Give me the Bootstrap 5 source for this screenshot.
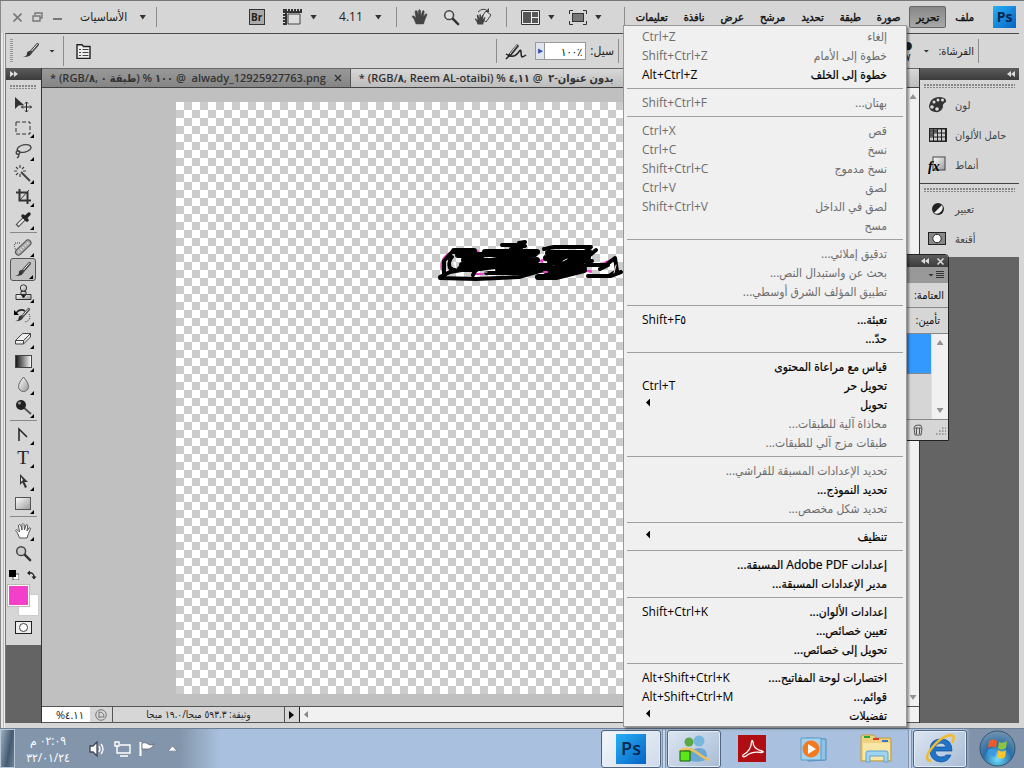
<!DOCTYPE html>
<html lang="ar">
<head>
<meta charset="utf-8">
<meta name="viewport" content="width=device-width, initial-scale=1">
<title>Photoshop</title>
<link rel="stylesheet" href="https://cdn.jsdelivr.net/npm/bootstrap@5.3.0/dist/css/bootstrap.min.css">
<style>
:root{--chrome:#d6d6d6;--edge:#4a4a4a;--dark:#646464}
body{font-family:"Open Sans","DejaVu Sans Condensed","DejaVu Sans",sans-serif;font-size:12px;line-height:16px;color:#222;background:var(--chrome);overflow:hidden}
button{font:inherit;color:inherit;background:none;border:0;padding:0}
svg{display:block;flex:none}
.fit{min-height:0;min-width:0}
.shell{border-top:1px solid #777;padding:0 5px 5px;background:linear-gradient(90deg,#888 1px,#e8e8e8 1px 3px,#bbb 3px 4px,#eee 4px 5px,var(--chrome) 5px)}
.shell-bar{height:32px;margin-left:-4px;margin-right:-4px;background:var(--chrome)}
.win-ctl{gap:10px}
.view-ctl{gap:14px}
.gap-arrow{gap:12px}
.opt-bar{height:35px;border-top:1px solid var(--edge);border-left:1px solid #888}
.vline{width:1px;height:24px;background:#8c8c8c}
.vline.low{height:20px}
.opt-rule{margin:0 12px 0 8px;height:30px}
.tri{width:7px;height:5px;background:#333;clip-path:polygon(0 0,100% 0,50% 100%)}
.tri-sm{width:6px;height:3px}
.up{transform:scaleY(-1)}
.flip{transform:scaleX(-1)}
.pale{opacity:.5}
.main-menu{gap:2px;padding:0 7px 0 4px}
.main-menu button{padding:0 6px;height:22px;line-height:18px;border:1px solid transparent;color:#111;font-size:11px;-webkit-text-stroke:.4px}
.main-menu .on{background:linear-gradient(#888,#a8a8a8);border-color:#666;border-radius:2px}
.ps-box{background:linear-gradient(135deg,#29b0f5,#0563c4);color:#06264d;font-weight:700;text-align:center}
.ps-mini{width:23px;height:22px;font-size:14px;line-height:21px;margin-left:10px}
.strip{height:12px;background:linear-gradient(#5c5c5c,#3c3c3c);color:#ddd}
.grip{height:4px;margin:0 4px 2px;background:radial-gradient(circle at 1px 1px,#888 1px,transparent 1px) 0 0/3px 3px}
.grip-v{width:3px;height:24px;background:repeating-linear-gradient(#999 0 1px,transparent 1px 2px)}
.tools{width:37px;background:var(--dark);border-right:1px solid #333;border-left:1px solid #777}
.tools-face{background:var(--chrome);padding:5px 1px 6px 0}
.tools-face .grip{margin-bottom:4px}
.tool{width:26px;height:23px;display:flex;align-items:center;justify-content:center;position:relative}
.more::after{content:"";position:absolute;right:2px;bottom:1px;border:2px solid;border-color:transparent #000 #000 transparent}
.tool.on{background:#c2c2c2;border:1px solid #555;border-radius:3px}
.tool-rule{height:1px;margin:1px 3px 2px 4px;background:#888;align-self:stretch}
.type-t{font:19px "Liberation Serif",serif}
.col-ctl{width:28px;height:20px}
.swatches{display:grid;grid-template-columns:10px 11px 10px;grid-template-rows:9px 12px 10px;width:31px}
.fore{grid-area:1/1/3/3;background:#f43fcb;border:1px solid #fff;outline:1px solid #bbb;z-index:1}
.backc{grid-area:2/2/4/4;background:#fff;border:1px solid #ccc}
.tabs{height:20px;background:linear-gradient(#999,#858585);border-bottom:1px solid #444;border-top:1px solid #666;font-weight:600;font-size:11px;color:#333}
.doc-tab{padding:0 8px;border-right:1px solid #555;white-space:nowrap;gap:8px}
.doc-tab.on{background:linear-gradient(#d8d8d8,#bdbdbd);flex:1;border:0}
.desk{background:#c0c0c0}
.board{margin:14px 0 12px 134px;position:relative;background:conic-gradient(#ccc 25%,#fff 0 50%,#ccc 0 75%,#fff 0) 0 0/16px 16px}
.scribble{position:absolute;left:244px;top:123px}
.vscroll{width:13px;background:#f1f1f1;border-left:1px solid #ddd;padding:6px 0}
.status{height:17px;border-top:1px solid #555;border-bottom:1px solid #555;font-size:10px;line-height:15px;background:var(--chrome)}
.pct{width:48px;padding-left:8px;background:#fff;text-align:center;font-size:11px}
.st-icon{width:22px}
.docinfo{width:173px;border:solid #555;border-width:0 1px}
.hscroll{background:#f1f1f1}
.dock{width:100px;border-left:1px solid #333;background:var(--dark)}
.dock-face{background:var(--chrome);color:#444;font-size:11px;padding:4px 0 3px}
.dock-face+.dock-face{border-top:1px solid #444}
.dock-row{height:30px;gap:7px;padding-left:8px;width:100%;white-space:nowrap;display:flex;align-items:center}
.dock-row svg{width:20px}
.edit-menu{position:absolute;top:25px;right:117px;width:284px;background:#f0f0f0;border:1px solid #979797;padding:1px 0;box-shadow:2px 2px 2px rgba(0,0,0,.4);z-index:20;color:#000}
.edit-menu button{display:flex;justify-content:space-between;align-items:center;width:100%;height:19px;padding:0 19px 0 18px;white-space:nowrap;line-height:19px}
.edit-menu button:not(:disabled)>:last-child{-webkit-text-stroke:.2px}
.edit-menu button:disabled{color:#6d6d6d}
.edit-menu hr{margin:4px 3px;border:0;border-top:1px solid #a0a0a0;opacity:1;height:1px}
.sub-arrow{width:4px;height:8px;margin:0 4px 4px;background:#000;clip-path:polygon(100% 0,100% 100%,0 50%)}
.layers{position:absolute;top:254px;right:75px;width:140px;border:1px solid #222;border-radius:0 4px 0 0;background:var(--chrome);z-index:10;font-size:11px;color:#111}
.lay-tabs{height:16px;background:#999;gap:2px}
.lay-row{height:25px;line-height:24px;padding:0 4px;border-bottom:1px solid #888}
.lay-row.lock{padding:0 8px;border:0}
.layer-list{height:87px;border-top:1px solid #888;border-bottom:1px solid #888}
.layer-list .vscroll{width:17px}
.layer-sel{height:40px;background:#3399ff;border-bottom:1px solid #888}
.lay-foot{height:20px;gap:13px;padding-right:2px}
.flow-input{width:41px;height:18px;border:1px solid #999;border-left:0;padding:0 3px;text-align:right;font-size:11px}
.stepper{width:10px;height:18px;border:1px solid #999;background:#dfe4ee;color:#3050b0;font-size:7px;line-height:14px}
.brush-set{width:400px;padding-right:40px;gap:4px;font-size:11px}
.brush-size{line-height:12px;padding-right:7px}
.brush-set .tri{margin-right:5px}
.taskbar{height:40px;background:linear-gradient(90deg,#8395ab 0 180px,#a9c1de 220px calc(100% - 60px),#8093aa calc(100% - 54px));border-top:1px solid #6d7f95}
.show-desk{width:15px;background:linear-gradient(100deg,#9fb0c0,#445a70 60%,#6f8396);border:1px solid #b8c8d8}
.clock{width:66px;color:#fff;line-height:17px;text-align:center}
.tray{gap:8px}
.task-btn{border:1px solid #52657c;border-radius:3px;box-shadow:inset 0 0 0 1px #e4ecf5;width:54px;height:38px;display:flex;align-items:center;justify-content:center;background:linear-gradient(135deg,#dce6f2,#a9bcd5)}
.task-btn.now{width:60px;background:linear-gradient(135deg,#f4f7fb,#cfdaea)}
.seam{width:4px;height:38px;margin:0 1px;border:solid #8095b0;border-width:0 1px;background:#c5d5e8}
.ps-big{width:30px;height:30px;font-size:18px;line-height:28px;font-weight:600}
.bare{display:flex;justify-content:center;align-items:center;width:62px}
.start{margin-left:12px}
</style>
</head>
<body>
<svg width="0" height="0" class="position-absolute">
<defs>
<linearGradient id="sil" x1="0" y1="0" x2="1" y2="1"><stop offset="0" stop-color="#fff"/><stop offset="1" stop-color="#999"/></linearGradient>
<linearGradient id="grd"><stop offset="0" stop-color="#111"/><stop offset="1" stop-color="#fff"/></linearGradient>
<radialGradient id="orb" cx=".5" cy=".8" r=".8"><stop offset="0" stop-color="#6fe0ff"/><stop offset=".5" stop-color="#2a6fa8"/><stop offset="1" stop-color="#7595b0"/></radialGradient>
<symbol id="hand" viewBox="0 0 18 18"><path d="M5 16 3 11 1 8.500q1-1.500 2.500 0L5 10 4 4q0-1.500 1-1.500T6.500 4L7.500 8 7.500 2.500Q8.500.5 9.500 2.500L10 8l1.500-5q1.500-1 1.700.5L12.500 9 14.500 6q1.500-.7 1.500.7L14 11.500 12.500 16z"/></symbol>
<symbol id="lens" viewBox="0 0 18 18"><circle cx="6.500" cy="6.500" r="4.700" stroke-width="1.600" stroke="#444"/><path d="m10.500 10.500 5.500 5.500" stroke="#333" stroke-width="2.600" stroke-linecap="round"/></symbol>
<symbol id="brush" viewBox="0 0 20 18"><path d="M2 15q4-.5 4-3.500t3.500-2.500q2 2 0 4T2 15z" fill="#333"/><path d="m9.500 10.500 7-8" stroke="#444" stroke-width="3" stroke-linecap="round"/><path d="m10.500 9 6-7" stroke="#eee" stroke-width="1"/></symbol>
<symbol id="rewind" viewBox="0 0 8 6"><path d="M4 0v6L0 3zM8 0v6L4 3z" fill="#ddd"/></symbol>
</defs>
</svg>

<div class="vh-100 d-flex flex-column position-relative">
<main class="shell flex-fill d-flex flex-column fit">
  <header class="shell-bar d-flex align-items-center">
    <div class="win-ctl d-flex align-items-center ps-2">
      <button aria-label="إغلاق" class="ms-1"><svg width="9" height="9" stroke="#777" stroke-width="1.600"><path d="m.5.500 8 8m0-8-8 8"/></svg></button>
      <button aria-label="استعادة"><svg width="11" height="10" fill="none" stroke="#777" stroke-width="1.400"><path d="M3 3V1h7v5H8M1 4h7v5H1z"/></svg></button>
      <button aria-label="تصغير"><svg width="9" height="10"><path d="M0 6h9v2H0z" fill="#777"/></svg></button>
      <button class="gap-arrow d-flex align-items-center ms-2"><span dir="rtl">الأساسيات</span><i class="tri"></i></button>
      <span class="vline low"></span>
    </div>
    <div class="view-ctl d-flex align-items-center ms-auto">
      <button aria-label="Bridge" class="me-1"><svg width="16" height="16"><rect x=".5" y=".5" width="15" height="15" fill="#aaa" stroke="#333"/><text x="2" y="12" font-size="10" font-weight="700" fill="#222">Br</text></svg></button>
      <button class="d-flex align-items-center gap-2" aria-label="إضافات"><svg width="19" height="16"><path d="M0 0h19v4H4v12H0z" fill="#333"/><path d="M5 5h12v10H5z" fill="#ddd" stroke="#444"/><path d="M4 1h14" stroke="#ddd" stroke-dasharray="1 2" stroke-width="2"/><path d="M1 4v12" stroke="#ddd" stroke-dasharray="1 2" stroke-width="2"/></svg><i class="tri"></i></button>
      <button class="gap-arrow d-flex align-items-center ms-2"><span>4.11</span><i class="tri"></i></button>
      <span class="vline low"></span>
      <button aria-label="اليد"><svg width="18" height="18" fill="#444" stroke="#444" stroke-width=".5"><use href="#hand"/></svg></button>
      <button aria-label="تكبير" class="ms-n1"><svg width="17" height="17" fill="#ddd"><use href="#lens"/></svg></button>
      <button aria-label="تدوير" class="ms-n1"><svg width="18" height="18" viewBox="0 0 18 18"><path d="m12 3 5 4-5 7-5-4z" fill="#ddd" stroke="#444"/><svg width="13" height="13" y="5" fill="#444"><use href="#hand"/></svg><path d="M4 4q5-5 10-1" fill="none" stroke="#444"/><path d="m15 0v4h-4z" fill="#444"/></svg></button>
      <span class="vline low"></span>
      <button class="d-flex align-items-center gap-2" aria-label="ترتيب المستندات"><svg width="19" height="15"><path d="M.5.500h18v14H.5z" fill="#eee" stroke="#333"/><path d="M2 2h8v11H2zM11 2h6v5h-6zM11 8h6v5h-6z" fill="#555"/></svg><i class="tri"></i></button>
      <button class="d-flex align-items-center gap-2" aria-label="وضع الشاشة"><svg width="18" height="15" fill="none" stroke="#333"><path d="M.5 4V.5H4M14 .500h3.500V4M17.500 11v3.500H14M4 14.500H.5V11"/><rect x="3.500" y="3.500" width="11" height="8" fill="#777"/></svg><i class="tri"></i></button>
      <span class="vline low ms-2"></span>
    </div>
    <nav class="main-menu d-flex align-items-center" dir="rtl">
      <span class="ps-box ps-mini">Ps</span>
      <button>ملف</button><button class="on">تحرير</button><button>صورة</button><button>طبقة</button><button>تحديد</button><button>مرشح</button><button>عرض</button><button>نافذة</button><button>تعليمات</button>
    </nav>
  </header>

  <section class="opt-bar d-flex align-items-center">
    <i class="grip-v ms-1"></i>
    <button class="d-flex align-items-center gap-2 ms-2" aria-label="فرشاة"><svg width="20" height="18"><use href="#brush"/></svg><i class="tri tri-sm"></i></button>
    <span class="vline opt-rule"></span>
    <button aria-label="لوحة الفرش"><svg width="15" height="15"><path d="M1 3V.7h5L7.500 2.500H14v12H1z" fill="#eee" stroke="#222" stroke-width="1.400"/><path d="M3 5.500h2M3 8.500h2M3 11.500h2M6.500 5.500h6M6.500 8.500h6M6.500 11.500h6" stroke="#444"/></svg></button>
    <div class="d-flex align-items-center ms-auto">
      <span class="vline"></span>
      <button class="mx-2" aria-label="بخاخ"><svg width="22" height="17" fill="none"><path d="m4 13 9-11" stroke="#333" stroke-width="3"/><path d="m5 11 7-9" stroke="#ddd"/><path d="m1 16 3-3M1 11q7 5 12-1 3-5 3-1t1 5q3-1 4-2" stroke="#222" stroke-width="1.500"/></svg></button>
      <button class="stepper" aria-label="شريط السيل">▶</button><input id="flow" class="flow-input" value="١٠٠٪" dir="ltr">
      <label for="flow" dir="rtl" class="ms-1">سيل:</label>
      <span class="vline ms-1"></span>
    </div>
    <div class="brush-set d-flex align-items-center">
      <span class="brush-size ms-auto text-center">●<br>٧</span>
      <i class="tri tri-sm"></i>
      <span dir="rtl">الفرشاة:</span><span class="vline"></span>
    </div>
  </section>

  <div class="d-flex flex-fill fit">
    <aside class="tools">
      <div class="strip d-flex align-items-center ps-1"><svg class="flip" width="8" height="6"><use href="#rewind"/></svg></div>
      <div class="tools-face d-flex flex-column align-items-center">
        <div class="grip align-self-stretch"></div>
        <button class="tool" aria-label="نقل"><svg width="20" height="18"><path d="M2 1v12l3.500-3.500L11 9z" fill="#333"/><path d="M13.500 6v10M8.500 11h10M12 7.500l1.500-1.500L15 7.500M12 14.500l1.500 1.500 1.500-1.500M10 9.500 8.500 11l1.500 1.500M17 9.500l1.500 1.500-1.500 1.500" fill="none" stroke="#222"/></svg></button>
        <button class="tool more" aria-label="تحديد"><svg width="16" height="14"><rect x="1" y="1" width="14" height="12" fill="none" stroke="#333" stroke-dasharray="4 2"/></svg></button>
        <button class="tool more" aria-label="لاسو"><svg width="18" height="16" fill="none" stroke="#444" stroke-width="1.400"><ellipse cx="10" cy="5.500" rx="7" ry="3.700" transform="rotate(-12 10 5)"/><circle cx="4" cy="9.500" r="1.800"/><path d="M4 11q2 2-1 4"/></svg></button>
        <button class="tool more" aria-label="عصا"><svg width="18" height="17" stroke="#444"><path d="M6 0v3M6 9v3M0 6h3M9 6h3M2 2l2 2M10 2 8 4M2 10l2-2" stroke-width="1.200"/><path d="m7 7 9 9" stroke-width="2"/></svg></button>
        <button class="tool more" aria-label="قص"><svg width="17" height="17" fill="none" stroke="#333" stroke-width="2"><path d="M1 4.500h11.500V16M4.500 1v11.500H16"/><path d="M5 12 14 2" stroke-width="1"/></svg></button>
        <button class="tool more" aria-label="قطارة"><svg width="17" height="17"><path d="m2 15 8-8" stroke="#555" stroke-width="4"/><path d="m3 14 7-7" stroke="#eee" stroke-width="2"/><path d="m8 5 4 4M11 6l3-3" stroke="#222" stroke-width="3.500" stroke-linecap="round"/></svg></button>
        <i class="tool-rule"></i>
        <button class="tool more" aria-label="معالجة"><svg width="20" height="18"><path d="M7 5H2q-2 5 3 9" fill="none" stroke="#333" stroke-dasharray="1 1"/><path d="M5.500 14 15 5" stroke="#555" stroke-width="7" stroke-linecap="round"/><path d="M5.500 14 15 5" stroke="#aaa" stroke-width="5" stroke-linecap="round"/><path d="M5.500 14 15 5" stroke="#eee" stroke-width="2" stroke-dasharray="1 2"/></svg></button>
        <button class="tool more on" aria-label="فرشاة"><svg width="20" height="18"><use href="#brush"/></svg></button>
        <button class="tool more" aria-label="ختم"><svg width="17" height="17" fill="url(#sil)" stroke="#333"><path d="M6 7.500h5v3H6z"/><circle cx="8.500" cy="4" r="3.200"/><path d="M1 10.500h15v5H1z"/><path d="M6.500 11h4l-2 3z" fill="#111"/></svg></button>
        <button class="tool more" aria-label="محفوظات"><svg width="20" height="17"><use href="#brush" width="19" height="17"/><path d="M3 6q4-5 9-2" fill="none" stroke="#222" stroke-width="1.500"/><path d="M1 3v5h5z"/><path d="M16 7q3 6-4 8" fill="none" stroke="#222" stroke-dasharray="1 1"/></svg></button>
        <button class="tool more" aria-label="ممحاة"><svg width="18" height="14" fill="#eee" stroke="#444"><path d="m1.500 8.500 7-7h8l-7 7zM1.500 8.500v3.500h8V8.500M9.500 12l7-7V1.500"/></svg></button>
        <button class="tool more" aria-label="تدرج"><svg width="17" height="13"><rect x=".5" y=".5" width="16" height="12" fill="url(#grd)" stroke="#444"/></svg></button>
        <button class="tool more" aria-label="تمويه"><svg width="13" height="17"><path d="M6.500 1q5 6 5 9.500a5 5 0 0 1-10 0Q1.500 7 6.500 1z" fill="url(#sil)" stroke="#666"/></svg></button>
        <button class="tool more" aria-label="تفتيح"><svg width="17" height="17"><path d="m8 8 8 7" stroke="#555" stroke-width="2"/><circle cx="6" cy="6" r="5" fill="#222"/><circle cx="4.500" cy="4" r="1.500" fill="#999"/></svg></button>
        <i class="tool-rule"></i>
        <button class="tool more" aria-label="قلم"><svg width="12" height="15" fill="none" stroke="#222" stroke-width="1.500"><path d="M2 14V2l8 8"/></svg></button>
        <button class="tool more type-t" aria-label="نص">T</button>
        <button class="tool more" aria-label="مسار"><svg width="11" height="16"><path d="M2 1v11l2.500-2.500L7 15l2-1-2.500-5H10z" fill="#333"/><path d="M3 4v5l2-2z" fill="#eee"/></svg></button>
        <button class="tool more" aria-label="مستطيل"><svg width="16" height="13"><rect x=".5" y=".5" width="15" height="12" fill="url(#sil)" stroke="#555"/></svg></button>
        <i class="tool-rule"></i>
        <button class="tool more" aria-label="يد"><svg width="19" height="18" fill="#fff" stroke="#555" stroke-width="1"><use href="#hand"/></svg></button>
        <button class="tool" aria-label="عدسة"><svg width="17" height="17" fill="#ccc"><use href="#lens"/></svg></button>
        <div class="col-ctl d-flex justify-content-between align-items-center">
          <button aria-label="الألوان الافتراضية"><svg width="10" height="10"><path d="M4 4h6v6H4z" fill="#fff" stroke="#555"/><path d="M0 0h7v7H0z"/></svg></button>
          <button aria-label="تبديل"><svg width="11" height="10" fill="none" stroke="#222" stroke-width="1.500"><path d="M2 3q6-1 6 4"/><path d="M4 .500 1 3l3 2.500zM5.500 6.500h5L8 9.500z" fill="#222" stroke="none"/></svg></button>
        </div>
        <div class="swatches"><button class="fore" aria-label="لون المقدمة"></button><button class="backc" aria-label="لون الخلفية"></button></div>
        <button class="tool" aria-label="قناع سريع"><svg width="17" height="13"><rect x=".5" y=".5" width="16" height="12" fill="#eee" stroke="#222"/><circle cx="8.500" cy="6.500" r="4" fill="#fff" stroke="#444"/></svg></button>
      </div>
    </aside>

    <section class="flex-fill d-flex flex-column fit">
      <div class="tabs d-flex overflow-hidden">
        <div class="doc-tab d-flex align-items-center" dir="ltr"><span>* (RGB/<bdi>٨</bdi>, <bdi>٠</bdi> <bdi>طبقة</bdi>) % <bdi>١٠٠</bdi> @ &nbsp;alwady_12925927763.png</span><button aria-label="إغلاق"><svg width="8" height="8" stroke="#333" stroke-width="1.400"><path d="m1 1 6 6m0-6-6 6"/></svg></button></div>
        <div class="doc-tab on d-flex align-items-center" dir="ltr"><span>* (RGB/<bdi>٨</bdi>, Reem AL-otaibi) % <bdi>٤,١١</bdi> @ &nbsp;<bdi>بدون عنوان-٢</bdi></span></div>
      </div>
      <div class="flex-fill d-flex fit">
        <div class="desk flex-fill d-flex flex-column">
          <div class="board flex-fill">
            <svg class="scribble" width="210" height="70" viewBox="0 0 210 70" fill="none" stroke="#000" stroke-linecap="round" stroke-linejoin="round">
              <path d="M31 27q-12 7-9 18l5 3M55 27l3-1M55 49l8 0M119 36l5-1M118 47h8M165 46h6M169 25l4 3M182 39l11-5" stroke="#f43fcb" stroke-width="2"/>
              <path d="M32 27 24 36V49M20 53l36 1 43-2 24-7M32 32q-4 5-2 11l5 2M20 52l10-5 34-6M53 50q3-7 8-8M66 48h36l20-8" stroke-width="4"/>
              <path d="M34 26h20M38 30h24M44 35h18M42 40h20M40 44h16M58 38l57-9M60 43l57-8M64 29h50M65 27h52M62 36h54M66 41h64M78 44h60M128 28h42M130 37h32M136 42h28M126 46h28M126 33h42M140 39h20M118 52h18l28-7M140 48l22-4" stroke-width="6"/>
              <path d="M82 20h14l9 1-6-3 6-1M91 24l10-1M124 24l10-2h37l-5 4M170 30l6-5M158 36l14 0M166 40h20l9-7 2 13-8 5h-21M190 51l11-4M180 44l8-4" stroke-width="4"/>
              <path d="M35 33q-5 5-1 9" stroke="#ccc" stroke-width="2"/>
              <path d="M143 36l4-2M196 40l-2 8M64 47h3" stroke="#f8d8f0" stroke-width="1"/>
              <path d="M122 35v2M168 46l3 1M124 47h3" stroke="#f43fcb" stroke-width="2"/>
            </svg>
          </div>
        </div>
        <div class="vscroll d-flex flex-column justify-content-between align-items-center"><i class="tri up pale"></i><i class="tri pale"></i></div>
      </div>
      <div class="status d-flex">
        <span class="pct"><bdo dir="ltr">%٤.١١</bdo></span>
        <span class="st-icon d-flex align-items-center justify-content-center"><svg width="12" height="12" fill="none" stroke="#777"><circle cx="6" cy="6" r="5.300"/><path d="M4 9V3q5 0 5 5L4 8"/></svg></span>
        <span class="docinfo text-center" dir="rtl">وثيقة: ٥٩٣.٣ ميجا/١٩.٠ ميجا</span>
        <button class="px-1 border-end border-dark" aria-label="المزيد"><svg width="6" height="8"><path d="M0 0v8l5-4z"/></svg></button>
        <div class="hscroll flex-fill d-flex align-items-center ps-1"><svg width="4" height="7"><path d="M4 0v7L0 3.500z" fill="#888"/></svg></div>
      </div>
    </section>

    <aside class="dock">
      <div class="strip d-flex justify-content-end align-items-center pe-1"><svg width="8" height="6"><use href="#rewind"/></svg></div>
      <div class="dock-face">
        <div class="grip"></div>
        <button class="dock-row"><svg width="20" height="18"><path d="M1 10Q2 2 10 1q9 0 8 5-4 2-3 5-2 6-8 5-6-1-6-6z" fill="#333"/><g fill="#ddd"><circle cx="4" cy="11" r="1.800"/><circle cx="6" cy="6" r="1.500"/><circle cx="10" cy="4" r="1.500"/><circle cx="14.500" cy="4" r="1.500"/><circle cx="9" cy="13" r="1.800"/></g></svg><span dir="rtl">لون</span></button>
        <button class="dock-row"><svg width="18" height="14" viewBox="0 0 18 14"><path d="M0 0h18v14H0z" fill="#222"/><path d="M1 3h16M1 7h16M1 11h16" stroke="#ccc" stroke-width="3" stroke-dasharray="3 1"/><path d="M1 3h7M1 7h3" stroke="#555" stroke-width="3" stroke-dasharray="3 1"/></svg><span dir="rtl">حامل الألوان</span></button>
        <button class="dock-row"><svg width="20" height="18"><rect x="5" y="1" width="12" height="13" fill="url(#sil)" stroke="#444"/><text x="0" y="15" font-family="Liberation Serif" font-size="14" font-style="italic" font-weight="700">fx</text></svg><span dir="rtl">أنماط</span></button>
      </div>
      <div class="dock-face">
        <div class="grip"></div>
        <button class="dock-row"><svg width="16" height="14" viewBox="0 0 16 14"><circle cx="8" cy="7" r="6" fill="#222"/><path d="M12 3a6 6 0 0 1-8 8z" fill="#eee"/></svg><span dir="rtl">تعبير</span></button>
        <button class="dock-row"><svg width="18" height="14"><rect x=".5" y=".5" width="17" height="12" fill="#888" stroke="#222"/><circle cx="9" cy="6.500" r="4.200" fill="#fff" stroke="#222"/></svg><span dir="rtl">أقنعة</span></button>
      </div>
    </aside>
  </div>
</main>

<section class="layers overflow-hidden">
  <div class="strip d-flex justify-content-end align-items-center gap-2 pe-1"><svg width="8" height="6"><use href="#rewind"/></svg><svg width="7" height="7" stroke="#ddd" stroke-width="1.500"><path d="m.5.500 6 6m0-6-6 6"/></svg></div>
  <div class="lay-tabs d-flex justify-content-end align-items-center pe-1"><i class="tri tri-sm"></i><svg width="8" height="8" stroke="#333"><path d="M0 .500h8M0 2.500h8M0 4.500h8M0 6.500h8"/></svg></div>
  <div class="lay-row" dir="rtl">العتامة:</div>
  <div class="lay-row lock" dir="rtl">تأمين:</div>
  <div class="layer-list d-flex"><div class="flex-fill"><div class="layer-sel"></div></div><div class="vscroll d-flex flex-column justify-content-between align-items-center"><i class="tri up pale"></i><i class="tri pale"></i></div></div>
  <div class="lay-foot d-flex justify-content-end align-items-center"><button aria-label="حذف"><svg width="10" height="12" fill="none" stroke="#555"><path d="M1 4h8L8 11H2zM3.500 4v6M6.500 4v6M1 3.500q0-2 4-2.500t4 2.500"/></svg></button><svg width="10" height="10"><path d="M0 9h10M3 6h7M6 3h4" stroke="#888" stroke-width="1.500" stroke-dasharray="1.500 1.500"/></svg></div>
</section>

<nav class="edit-menu" aria-label="تحرير">
  <button disabled><span>Ctrl+Z</span><span dir="rtl">إلغاء</span></button>
  <button disabled><span>Shift+Ctrl+Z</span><span dir="rtl">خطوة إلى الأمام</span></button>
  <button><span>Alt+Ctrl+Z</span><span dir="rtl">خطوة إلى الخلف</span></button>
  <hr>
  <button disabled><span>Shift+Ctrl+F</span><span dir="rtl">بهتان...</span></button>
  <hr>
  <button disabled><span>Ctrl+X</span><span dir="rtl">قص</span></button>
  <button disabled><span>Ctrl+C</span><span dir="rtl">نسخ</span></button>
  <button disabled><span>Shift+Ctrl+C</span><span dir="rtl">نسخ مدموج</span></button>
  <button disabled><span>Ctrl+V</span><span dir="rtl">لصق</span></button>
  <button disabled><span>Shift+Ctrl+V</span><span dir="rtl">لصق في الداخل</span></button>
  <button disabled><i></i><span dir="rtl">مسح</span></button>
  <hr>
  <button disabled><i></i><span dir="rtl">تدقيق إملائي...</span></button>
  <button disabled><i></i><span dir="rtl">بحث عن واستبدال النص...</span></button>
  <button disabled><i></i><span dir="rtl">تطبيق المؤلف الشرق أوسطي...</span></button>
  <hr>
  <button><span>Shift+F<bdi>٥</bdi></span><span dir="rtl">تعبئة...</span></button>
  <button><i></i><span dir="rtl">حدّ...</span></button>
  <hr>
  <button><i></i><span dir="rtl">قياس مع مراعاة المحتوى</span></button>
  <button><span>Ctrl+T</span><span dir="rtl">تحويل حر</span></button>
  <button><i class="sub-arrow"></i><span dir="rtl">تحويل</span></button>
  <button disabled><i></i><span dir="rtl">محاذاة آلية للطبقات...</span></button>
  <button disabled><i></i><span dir="rtl">طبقات مزج آلي للطبقات...</span></button>
  <hr>
  <button disabled><i></i><span dir="rtl">تحديد الإعدادات المسبقة للفراشي...</span></button>
  <button><i></i><span dir="rtl">تحديد النموذج...</span></button>
  <button disabled><i></i><span dir="rtl">تحديد شكل مخصص...</span></button>
  <hr>
  <button><i class="sub-arrow"></i><span dir="rtl">تنظيف</span></button>
  <hr>
  <button><i></i><span dir="rtl">إعدادات Adobe PDF المسبقة...</span></button>
  <button><i></i><span dir="rtl">مدير الإعدادات المسبقة...</span></button>
  <hr>
  <button><span>Shift+Ctrl+K</span><span dir="rtl">إعدادات الألوان...</span></button>
  <button><i></i><span dir="rtl">تعيين خصائص...</span></button>
  <button><i></i><span dir="rtl">تحويل إلى خصائص...</span></button>
  <hr>
  <button><span>Alt+Shift+Ctrl+K</span><span dir="rtl">اختصارات لوحة المفاتيح....</span></button>
  <button><span>Alt+Shift+Ctrl+M</span><span dir="rtl">قوائم...</span></button>
  <button><i class="sub-arrow"></i><span dir="rtl">تفضيلات</span></button>
</nav>

<footer class="taskbar d-flex align-items-center">
  <button class="show-desk align-self-stretch" aria-label="إظهار سطح المكتب"></button>
  <div class="clock" dir="rtl">٠٢:٠٩ م<br>٣٢/٠١/٢٤</div>
  <div class="tray d-flex align-items-center ms-2">
    <svg width="17" height="16" fill="none" stroke="#fff" stroke-width="1.300"><path d="M1 5h3l4-4v14l-4-4H1z" fill="#fff" stroke="#445"/><path d="M10 5q2 3 0 6M12 3q4 5 0 10"/></svg>
    <svg width="17" height="16" fill="none" stroke="#fff" stroke-width="1.400"><path d="M6 4h10v8H3V8M6 15h8M1 1h4v4H1zM3 5v3"/></svg>
    <svg width="17" height="16"><path d="M1.500 1v14" stroke="#fff" stroke-width="2"/><path d="M3 2q4-1 6 1t6 0q-2 5-6 5T3 8z" fill="#fff" stroke="#445" stroke-width=".6"/></svg>
    <svg width="9" height="5" class="ms-1"><path d="M4.500 0 9 5H0z" fill="#fff" stroke="#456" stroke-width=".5"/></svg>
  </div>
  <div class="d-flex align-items-center ms-auto pe-2">
    <button class="task-btn now" aria-label="Photoshop"><span class="ps-box ps-big">Ps</span></button>
    <i class="seam"></i>
    <button class="task-btn" aria-label="Messenger"><svg width="32" height="28" viewBox="0 0 32 28"><circle cx="11" cy="7" r="4.500" fill="#58a846"/><path d="M3 24q0-11 8-11t8 11z" fill="#6bb552"/><circle cx="21" cy="6" r="5.500" fill="#78b7dd"/><path d="M12 26q0-13 9-13t8 11q-6 4-17 2z" fill="#6aa7d3"/><path d="M1 16q9-5 17 1t13 8" fill="none" stroke="#f0c060" stroke-width="2.500"/><path d="M2 16h10v10H2z" fill="#5de61a" stroke="#175a0a"/></svg></button>
    <button class="bare" aria-label="Adobe Reader"><svg width="28" height="27"><path d="M0 0h28v27H0z" fill="#b00e12"/><path d="M5 20q8-4 8.500-13 .5-3 1.500 0 0 7 9 9 3 1-1 1.500-9-1.500-15 3.500-4 2-3-1z" fill="none" stroke="#fff" stroke-width="1.300"/></svg></button>
    <button class="bare" aria-label="Media Player"><svg width="29" height="26"><path d="m6 2 20 1v21l-18 1z" fill="#8fc2e4" stroke="#4d8cbb"/><path d="M1 2h20v22H1z" fill="#a5d2ec" stroke="#5b9cc7"/><circle cx="11" cy="13" r="8.500" fill="#f47a20"/><path d="m8 8 8 5-8 5z" fill="#fff"/></svg></button>
    <button class="bare" aria-label="Explorer"><svg width="33" height="29"><path d="M1 3q0-2 2-2h11l2 3h15v23H1z" fill="#f0d27c" stroke="#b99a45"/><path d="M4 2h6v2H4z" fill="#29a336"/><path d="M13 4h6v2h-6z" fill="#d33"/><path d="M22 6h6v2h-6z" fill="#37c"/><path d="M3 9h27v17H3z" fill="#f8e6a6"/><path d="M6 28V19q0-2 2-2h18q2 0 2 2v9h-4v-6H10v6z" fill="#9fd4f0" stroke="#5fa3cf"/></svg></button>
    <i class="seam"></i>
    <button class="task-btn" aria-label="Internet Explorer"><svg width="31" height="31" viewBox="0 0 31 31"><path d="M27 18H10q1 6 6 6 4 0 5-2h5q-3 7-10 7-11-1-11-12T16 6q11 0 11 12zM10 14h11q-1-4-5-4t-6 4z" fill="#1f74c8" stroke="#0d4d96" stroke-width=".7"/><path d="M6 28q-8-1 0-12Q16 3 26 2q5 1 1 8" fill="none" stroke="#eebb2c" stroke-width="2.500"/></svg></button>
    <button class="start" aria-label="ابدأ"><svg width="37" height="37"><circle cx="18.500" cy="18.500" r="17.500" fill="url(#orb)" stroke="#34556f"/><path d="M10 11q4-3 8 0l-1 7q-4-3-8 0z" fill="#ef5a25"/><path d="M20 12q4 2 8-1l-1 7q-4 3-8 0z" fill="#8cc63e"/><path d="M9 20q4-3 8 0l-1 7q-4-3-8 0z" fill="#3b9ae0"/><path d="M19 20q4 3 8 0l-1 7q-4 3-8 0z" fill="#fcc52d"/></svg></button>
  </div>
</footer>
</div>
<script src="https://cdn.jsdelivr.net/npm/bootstrap@5.3.0/dist/js/bootstrap.bundle.min.js"></script>
</body>
</html>
